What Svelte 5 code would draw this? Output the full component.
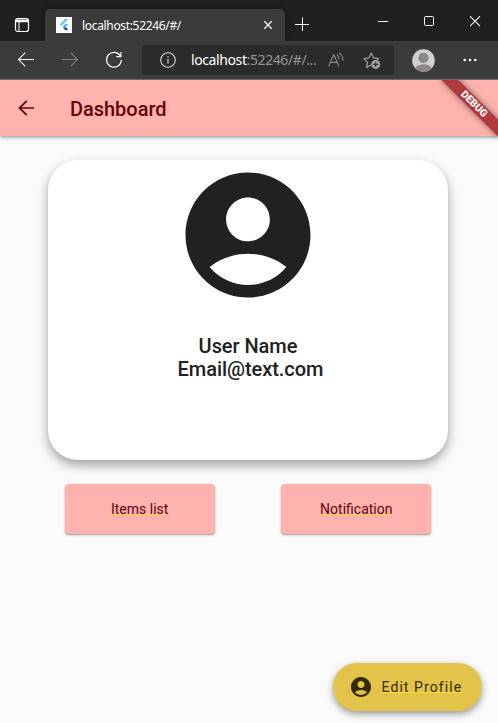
<script>
  const account =
    'M12 2C6.48 2 2 6.48 2 12s4.48 10 10 10 10-4.48 10-10S17.52 2 12 2zm0 4c1.93 0 3.5 1.57 3.5 3.5S13.93 13 12 13s-3.5-1.57-3.5-3.5S10.07 6 12 6zm0 14c-2.03 0-4.43-.82-6.14-2.88C7.55 15.8 9.68 15 12 15s4.45.8 6.14 2.12C16.43 19.18 14.03 20 12 20z';
  const actions = ['Items list', 'Notification'];
</script>

<div class="window">
  <header class="tabs">
    <svg class="tabmenu" width="16" height="16" viewBox="0 0 16 16" fill="none" stroke="#fff">
      <rect x="1.5" y="1.5" width="13" height="13" rx="2.2" stroke-width="1.2" />
      <path d="M1.5 3.2h13M2 4.5h12" stroke-width="1.5" />
      <path d="M5 5v9.5" stroke-width="1" />
    </svg>
    <div class="tab">
      <svg width="16" height="16" viewBox="0 0 16 16">
        <rect width="16" height="16" fill="#fff" />
        <path d="M9.2 2h3L5.3 8.9 3.8 7.4z" fill="#54c5f8" />
        <path d="M9.2 7h3L9.3 9.9l2.9 2.9h-3L6.3 9.9z" fill="#40b9ee" />
        <path d="M7.8 11.4l1.5-1.5 2.9 3.1h-3z" fill="#01579b" />
      </svg>
      <span class="title">localhost:52246/#/</span>
      <svg class="close" width="10" height="10" viewBox="0 0 10 10" stroke="#f2f2f2" stroke-width="1.3">
        <path d="M1.3 1.3l7.4 7.4M8.7 1.3L1.3 8.7" />
      </svg>
    </div>
    <svg class="plus" width="14" height="14" viewBox="0 0 14 14" stroke="#fff" stroke-width="1">
      <path d="M0 7.5h14M7.5 .5v14" />
    </svg>
    <div class="controls">
      <svg width="11" height="11" viewBox="0 0 11 11" stroke="#fff"><path d="M0 5.5h10" /></svg>
      <svg width="11" height="11" viewBox="0 0 11 11" stroke="#fff" fill="none"><rect x=".5" y=".5" width="9" height="9" rx="1.2" /></svg>
      <svg width="11" height="11" viewBox="0 0 11 11" stroke="#fff" stroke-width="1.1"><path d="M0 .2l10 10M10 .2l-10 10" /></svg>
    </div>
  </header>

  <nav class="toolbar">
    <svg class="back" width="18" height="16" viewBox="0 0 18 16" fill="none" stroke="#f4f4f4" stroke-width="1.1">
      <path d="M17 7.5H1.5M8.3 .7L1.5 7.5l6.8 6.8" />
    </svg>
    <svg class="forward" width="18" height="16" viewBox="0 0 18 16" fill="none" stroke="#808080" stroke-width="1.1">
      <path d="M0 7.5h15.5M8.7 .7l6.8 6.8-6.8 6.8" />
    </svg>
    <svg class="reload" width="18" height="18" viewBox="0 0 18 18" fill="none" stroke="#f4f4f4" stroke-width="1.2">
      <path d="M15.6 5.4A7.4 7.4 0 1 0 16.4 9M15.9 1v4.7h-4.7" />
    </svg>
    <div class="address">
      <svg class="info" width="16" height="16" viewBox="0 0 16 16" fill="none" stroke="#d8d8d8" stroke-width="1.1">
        <circle cx="8" cy="8" r="7.3" />
        <path d="M8 7v4.8M8 4.2v1.3" stroke-width="1.2" />
      </svg>
      <span class="url"><b>localhost</b>:52246/#/...</span>
      <svg class="read" width="16" height="16" viewBox="0 0 16 16" fill="none" stroke="#909090" stroke-width="1.1">
        <path d="M.7 14.4L5.5 3h.5l4.8 11.4M2.5 10.4h6.6M8.9 2.7c1.4 1.1 2.1 2.7 2.1 4.6M11 .9c2.5 1.7 4 4.3 4 7.6" />
      </svg>
      <svg class="star" width="18" height="18" viewBox="0 0 18 18" fill="none" stroke="#a0a0a0" stroke-width="1.2">
        <path d="M8 14l-4.4 2.4.9-5L.9 7.6l4.9-.7L8.2 2l2.3 4.8 5.1.8-2 2" stroke-linejoin="round" />
        <circle cx="12.7" cy="13.4" r="4.5" fill="#a5a5a5" stroke="none" />
        <path d="M12.7 10.9v5M10.2 13.4h5" stroke="#2b2b2b" />
      </svg>
    </div>
    <svg class="avatar" width="23" height="23" viewBox="0 0 23 23">
      <defs><clipPath id="face"><circle cx="11.5" cy="11.5" r="11.3" /></clipPath></defs>
      <g clip-path="url(#face)">
        <rect width="23" height="23" fill="#d2d0ce" />
        <circle cx="11.5" cy="8.9" r="5.1" fill="#8a8786" />
        <ellipse cx="11.5" cy="20.5" rx="8.5" ry="5.3" fill="#8a8786" />
      </g>
    </svg>
    <svg class="more" width="14" height="4" viewBox="0 0 14 4" fill="#fff">
      <circle cx="1.7" cy="2" r="1.3" /><circle cx="7" cy="2" r="1.3" /><circle cx="12.3" cy="2" r="1.3" />
    </svg>
  </nav>

  <main>
    <div class="appbar">
      <svg width="24" height="24" viewBox="0 0 24 24" fill="#67000d">
        <path d="M20 11.2H7.6l5.8-5.8L12.2 4.2 4.2 12l8 7.8 1.2-1.2-5.8-5.8H20v-1.6z" />
      </svg>
      <h1>Dashboard</h1>
    </div>
    <section class="card">
      <svg width="150" height="150" viewBox="0 0 24 24" fill="#212121"><path d={account} /></svg>
      <p>User Name</p>
      <p class="mail">Email@text.com</p>
    </section>
    <div class="actions">
      {#each actions as label}
        <button><span>{label}</span></button>
      {/each}
    </div>
    <button class="fab">
      <svg width="24" height="24" viewBox="0 0 24 24" fill="#332a00"><path d={account} /></svg>
      <span>Edit Profile</span>
    </button>
    <div class="banner">DEBUG</div>
  </main>
</div>

<style>
  :global(body) {
    margin: 0;
    overflow: hidden;
  }
  * {
    box-sizing: border-box;
  }
  svg {
    display: block;
    flex: none;
  }
  .window {
    width: 498px;
    height: 723px;
    display: flex;
    flex-direction: column;
    overflow: hidden;
    font-family: Roboto, sans-serif;
  }
  .tabs {
    height: 41px;
    flex: none;
    display: flex;
    background: #202020;
    font-family: 'Noto Sans', sans-serif;
  }
  .tabmenu {
    margin: 17px 0 0 14px;
  }
  .tab {
    width: 240px;
    height: 32px;
    margin: 9px 0 0 15px;
    padding: 0 12px 0 11px;
    display: flex;
    align-items: center;
    border-radius: 5px 5px 0 0;
    background: #3b3b3b;
    box-shadow: 0 0 4px #101010;
    clip-path: inset(-5px -5px 0);
    color: #fff;
  }
  .title {
    margin-left: 10px;
    font-size: 12px;
    letter-spacing: -0.33px;
    white-space: nowrap;
  }
  .close {
    margin-left: auto;
  }
  .plus {
    margin: 17px 0 0 10px;
  }
  .controls {
    display: flex;
    gap: 35px;
    margin: 16px 0 0 69px;
  }
  .toolbar {
    height: 39px;
    flex: none;
    display: flex;
    align-items: center;
    padding-left: 17px;
    background: #3b3b3b;
    border-bottom: 1px solid #6b6b6b;
    font-family: 'Noto Sans', sans-serif;
  }
  .forward {
    margin-left: 27px;
  }
  .reload {
    margin-left: 25px;
  }
  .address {
    width: 252px;
    height: 30px;
    margin-left: 19px;
    padding-left: 18px;
    display: flex;
    align-items: center;
    border-radius: 4px;
    background: #2b2b2b;
  }
  .url {
    width: 126px;
    margin: -1px 0 0 15px;
    font-size: 14px;
    letter-spacing: -0.4px;
    white-space: nowrap;
    color: #949494;
  }
  .url b {
    font-weight: 400;
    color: #fff;
  }
  .read {
    margin: -1px 0 0 10.5px;
  }
  .star {
    margin-left: 19px;
  }
  .avatar {
    margin-left: 18px;
  }
  .more {
    margin-left: 28px;
  }
  main {
    position: relative;
    flex: 1;
    display: flex;
    flex-direction: column;
    overflow: hidden;
    background: #fafafa;
  }
  .appbar {
    height: 56px;
    flex: none;
    display: flex;
    align-items: center;
    padding-left: 14px;
    background: #ffb3af;
    box-shadow: 0 1px 4px rgba(0, 0, 0, 0.45);
  }
  h1 {
    margin: 2px 0 0 32px;
    font-size: 20px;
    line-height: 24px;
    font-weight: 500;
    letter-spacing: -0.03px;
    color: #67000d;
  }
  .card {
    width: 400px;
    height: 300px;
    margin: 24px 0 0 48px;
    display: flex;
    flex-direction: column;
    align-items: center;
    border-radius: 30px;
    background: #fff;
    box-shadow: 0 5px 11px rgba(0, 0, 0, 0.36);
  }
  .card p {
    margin: 25px 0 0;
    font-size: 20px;
    line-height: 23px;
    font-weight: 500;
    letter-spacing: -0.05px;
    color: #212121;
  }
  .card .mail {
    margin: 0 0 0 5px;
  }
  .actions {
    display: flex;
    gap: 66.6px;
    margin: 24px 0 0 64.7px;
  }
  button {
    border: 0;
    padding: 0;
    font-family: inherit;
  }
  .actions button {
    width: 150px;
    height: 50px;
    display: flex;
    align-items: center;
    justify-content: center;
    border-radius: 4px;
    background: #ffb3af;
    color: #67000d;
    font-size: 14px;
    box-shadow: 0 1px 2px rgba(0, 0, 0, 0.38);
  }
  button span {
    height: 16px;
    line-height: 16px;
    white-space: nowrap;
    background: linear-gradient(#ffdf3b, #ffdf3b) 0 13px / 100% 1px no-repeat;
  }
  .fab {
    position: absolute;
    right: 16px;
    bottom: 12px;
    width: 149px;
    height: 48px;
    display: flex;
    align-items: center;
    padding-left: 16px;
    gap: 8.5px;
    border-radius: 24px;
    background: #e3c349;
    color: #332a00;
    font-size: 14px;
    letter-spacing: 1.08px;
    box-shadow: 0 3px 7px rgba(0, 0, 0, 0.4);
  }
  .banner {
    position: absolute;
    top: 28px;
    right: -40px;
    width: 80px;
    height: 12px;
    transform-origin: 40px -28px;
    transform: rotate(45deg);
    background: rgba(150, 20, 24, 0.76);
    box-shadow: 0 0 6px rgba(0, 0, 0, 0.5);
    color: #fff;
    font-size: 10.2px;
    line-height: 12px;
    font-weight: 900;
    text-align: center;
  }
</style>
